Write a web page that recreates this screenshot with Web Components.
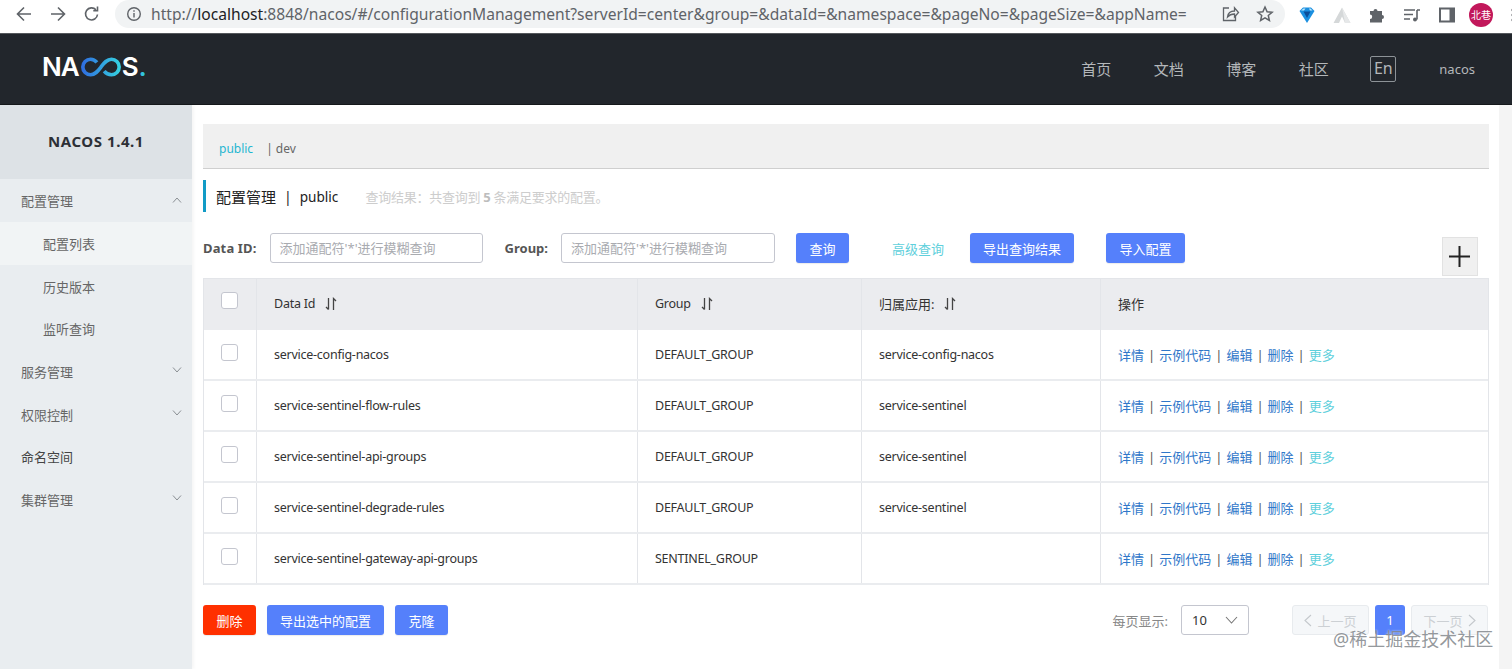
<!DOCTYPE html>
<html>
<head>
<meta charset="utf-8">
<title>Nacos</title>
<style>
    html, body { margin: 0; height: 100%; overflow: hidden; background: #fff; }
    body { font-family: "Noto Sans", "Noto Sans CJK SC", sans-serif; font-size: 13px; color: #333; }
    .shell { display: flex; flex-direction: column; height: 669px; position: relative; }
    .middle { display: flex; flex: 1; min-height: 0; }
</style>
</head>
<body>
<div class="shell">
    <browser-bar url="http://localhost:8848/nacos/#/configurationManagement?serverId=center&group=&dataId=&namespace=&pageNo=&pageSize=&appName="></browser-bar>
    <top-nav></top-nav>
    <div class="middle">
        <side-nav></side-nav>
        <config-page></config-page>
        <page-scrollbar></page-scrollbar>
    </div>
    <juejin-mark>@稀土掘金技术社区</juejin-mark>
</div>

<script>
const cjk = `"Noto Sans", "Noto Sans CJK SC", sans-serif`;

class BrowserBar extends HTMLElement {
    constructor() {
        super();
        this.attachShadow({ mode: 'open' });
    }
    connectedCallback() {
        // host part of the address is darker than the rest, like in Chrome
        const url = this.getAttribute('url');
        const hostStart = url.indexOf('localhost');
        const hostEnd = url.indexOf(':8848');
        this.shadowRoot.innerHTML = `
            <style>
                :host { display: flex; align-items: flex-start; height: 33px; background: #fff; border-bottom: 1px solid #55585c; font-family: ${cjk}; overflow: hidden; }
                svg { display: block; flex: none; }
                .nav { display: flex; gap: 14px; padding: 4px 0 0 14px; }
                .pill { display: flex; align-items: center; flex: none; width: 1170px; height: 28px; margin-left: 13px; background: #f1f3f4; border-radius: 14px; box-sizing: border-box; padding-left: 11px; }
                .url { flex: 1; margin-left: 9px; font-size: 15.6px; color: #5f6368; white-space: nowrap; overflow: hidden; }
                .url b { font-weight: 400; color: #202124; }
                .pill .end { display: flex; gap: 15px; padding-right: 10px; }
                .ext { display: flex; align-items: center; gap: 15px; padding: 3px 0 0 12px; }
                .avatar { width: 24px; height: 24px; border-radius: 50%; background: #c2185b; color: #fff; font-size: 10px; line-height: 24px; text-align: center; flex: none; margin-left: -3px; }
            </style>
            <div class="nav">
                <svg width="20" height="20" viewBox="0 0 20 20" fill="none" stroke="#5f6368" stroke-width="1.6"><path d="M17 10H4M10 3.5 3.5 10l6.5 6.5"/></svg>
                <svg width="20" height="20" viewBox="0 0 20 20" fill="none" stroke="#5f6368" stroke-width="1.6"><path d="M3 10h13M10 3.5l6.5 6.5-6.5 6.5"/></svg>
                <svg width="20" height="20" viewBox="0 0 20 20" fill="none" stroke="#5f6368" stroke-width="1.6"><path d="M15.5 10.5a6 6 0 1 1-1.5-4.6"/><path d="M15.5 2.5v4.2h-4.2" stroke-width="1.6"/></svg>
            </div>
            <div class="pill">
                <svg width="16" height="16" viewBox="0 0 16 16" fill="none" stroke="#5f6368" stroke-width="1.4"><circle cx="8" cy="8" r="6.3"/><path d="M8 7v4.4M8 4.2v1.5"/></svg>
                <div class="url">${url.slice(0, hostStart)}<b>${url.slice(hostStart, hostEnd)}</b>${url.slice(hostEnd).replace(/&/g, '&amp;')}</div>
                <div class="end">
                    <svg width="20" height="20" viewBox="0 0 20 20" fill="none" stroke="#5f6368" stroke-width="1.3"><path d="M9 4H3.5v12.5h12V12"/><path d="M7.5 13c.5-4 3-6 7-6V3.8l4 4.7-4 4.5V10c-3 0-5.300 1-7 3z"/></svg>
                    <svg width="20" height="20" viewBox="0 0 20 20" fill="none" stroke="#5f6368" stroke-width="1.5"><path d="m10 3 2.100 4.700 5 .5-3.800 3.300 1.100 5L10 13.900l-4.400 2.600 1.100-5L2.900 8.200l5-.5z"/></svg>
                </div>
            </div>
            <div class="ext">
                <svg width="20" height="20" viewBox="0 0 20 20"><path d="M2.500 6 6 2.500h8L17.500 6 10 18z" fill="#1a8fe0"/><path d="M6.500 6.500h7L10 13z" fill="#0b4f9a"/><path d="M4 5.500 6.500 3.500h2L7 5.500zM15.500 5.500l-2-2h-1.500l1 2z" fill="#bfe8fb"/></svg>
                <svg width="20" height="20" viewBox="0 0 20 20"><path d="M1.500 18 10 2.500 18.500 18h-5.500L10 11.500 7 18z" fill="#d5d8d9"/><path d="M10 2.500 13 18h5.500z" fill="#e6e8e9"/></svg>
                <svg width="20" height="20" viewBox="0 0 20 20"><path d="M3 6h3.500a2 2 0 1 1 4 0H15v4a2 2 0 1 1 0 4v3.500H3V14a2.200 2.200 0 1 0 0-4.400z" fill="#5f6368"/></svg>
                <svg width="20" height="20" viewBox="0 0 20 20" fill="none" stroke="#5f6368" stroke-width="1.6"><path d="M2 5h11M2 9.500h9M2 14h6M15 5h3M15 5v9.500"/><circle cx="13" cy="14.500" r="2" fill="#5f6368" stroke="none"/></svg>
                <svg width="20" height="20" viewBox="0 0 20 20"><path d="M3 3.500h14v13H3z" fill="#fff" stroke="#5f6368" stroke-width="2"/><path d="M12.500 3.500H17v13h-4.500z" fill="#5f6368"/></svg>
                <div class="avatar">北巷</div>
                <svg width="8" height="20" viewBox="0 0 8 20" fill="#5f6368"><circle cx="5" cy="5" r="1.600"/><circle cx="5" cy="10" r="1.600"/><circle cx="5" cy="15" r="1.600"/></svg>
            </div>`;
    }
}
customElements.define('browser-bar', BrowserBar);

class TopNav extends HTMLElement {
    constructor() {
        super();
        this.attachShadow({ mode: 'open' }).innerHTML = `
            <style>
                :host { display: flex; align-items: center; height: 70px; background: #22262c; border-bottom: 1px solid #15181b; font-family: ${cjk}; }
                .logo { display: flex; align-items: center; margin: -4px 0 0 42px; color: #fff; font: 600 26px/26px "Inter", "Noto Sans", sans-serif; letter-spacing: -1px; }
                .logo svg { display: block; margin: 0 0 0 1px; }
                .logo i { font-style: normal; color: #33c3dc; margin-left: 1px; }
                nav { margin-left: auto; display: flex; align-items: center; padding-right: 37px; color: #b4b7ba; font-size: 15px; }
                nav a { width: 30px; margin-right: 42.500px; margin-top: -1px; }
                .en { box-sizing: border-box; width: 26px; height: 26px; border: 1px solid #8d9297; border-radius: 2px; line-height: 22px; text-align: center; font-size: 16px; margin: 0 43px 0 -1px; }
                .user { font-size: 13px; }
            </style>
            <div class="logo">NA<svg width="42" height="20" viewBox="0 0 42 22" fill="none" stroke-width="4"><defs><linearGradient id="g" x1="0" x2="1"><stop offset="0" stop-color="#2f6fe0"/><stop offset="1" stop-color="#35cfe0"/></linearGradient></defs><path d="M16.500 6C14.500 3.500 12 2.500 9.500 2.500a8.500 8.500 0 0 0 0 17c5 0 8-4 11.500-8.500s6.500-8.500 11.500-8.500a8.500 8.500 0 0 1 0 17c-3 0-6-1.500-8-4" stroke="url(#g)"/></svg>S<i>.</i></div>
            <nav>
                <a>首页</a><a>文档</a><a>博客</a><a>社区</a>
                <div class="en">En</div>
                <div class="user">nacos</div>
            </nav>`;
    }
}
customElements.define('top-nav', TopNav);

class SideNav extends HTMLElement {
    constructor() {
        super();
        const chevron = up => `<svg width="10" height="6" viewBox="0 0 10 6" fill="none" stroke="#8a8f94" stroke-width="1"><path d="${up ? 'M1 5.500 5 1l4 4.500' : 'M1 .5 5 5l4-4.500'}"/></svg>`;
        const items = [
            { text: '配置管理', open: true },
            { text: '配置列表', sub: true, active: true },
            { text: '历史版本', sub: true },
            { text: '监听查询', sub: true },
            { text: '服务管理', arrow: true },
            { text: '权限控制', arrow: true },
            { text: '命名空间', dark: true },
            { text: '集群管理', arrow: true },
        ];
        const rows = items.map(i => `
            <div class="item ${i.sub ? 'sub' : ''} ${i.active ? 'active' : ''} ${i.dark ? 'dark' : ''}">
                <span>${i.text}</span>${i.open ? chevron(true) : i.arrow ? chevron(false) : ''}
            </div>`).join('');
        this.attachShadow({ mode: 'open' }).innerHTML = `
            <style>
                :host { display: block; flex: none; width: 192px; background: #e9edf0; box-shadow: 2px 0 3px rgba(0,0,0,.04); font-family: ${cjk}; font-size: 13px; color: #666; }
                .title { height: 74.300px; background: #dde2e6; display: flex; align-items: center; justify-content: center; color: #2d3036; font: 700 15px "Noto Sans", sans-serif; letter-spacing: .55px; padding-bottom: 2px; box-sizing: border-box; }
                .item { display: flex; align-items: center; justify-content: space-between; height: 42.700px; padding: 0 10px 0 21px; box-sizing: border-box; }
                .item svg { margin-top: -2px; }
                .sub { padding-left: 43px; }
                .active { background: #f1f4f5; }
                .dark { color: #444; }
            </style>
            <div class="title">NACOS 1.4.1</div>
            ${rows}`;
    }
}
customElements.define('side-nav', SideNav);

class NacosButton extends HTMLElement {
    constructor() {
        super();
        this.attachShadow({ mode: 'open' }).innerHTML = `
            <style>
                :host { display: inline-flex; align-items: center; justify-content: center; flex: none; box-sizing: border-box; height: 30px; padding: 0 13px; border-radius: 3px; background: #5580fb; color: #fff; font-family: ${cjk}; font-size: 13px; box-shadow: 0 1px 1px rgba(0,0,0,.08); }
                :host([danger]) { background: #ff3000; }
            </style>
            <slot></slot>`;
    }
}
customElements.define('nacos-button', NacosButton);

class SearchField extends HTMLElement {
    constructor() {
        super();
        this.attachShadow({ mode: 'open' }).innerHTML = `
            <style>
                :host { display: flex; align-items: center; flex: none; font-family: ${cjk}; }
                label { font: 700 13px "Noto Sans", sans-serif; color: #555; margin-right: 13px; letter-spacing: var(--label-spacing, 0); }
                .box { box-sizing: border-box; width: var(--box-width, 214px); height: 30px; border: 1px solid #c4c6cf; border-radius: 3px; background: #fff; padding-left: 9px; line-height: 28px; font-size: 13px; color: #a9abb0; }
            </style>
            <label><slot></slot></label>
            <div class="box">添加通配符'*'进行模糊查询</div>`;
    }
}
customElements.define('search-field', SearchField);

class ConfigTable extends HTMLElement {
    constructor() {
        super();
        const rows = [
            ['service-config-nacos', 'DEFAULT_GROUP', 'service-config-nacos'],
            ['service-sentinel-flow-rules', 'DEFAULT_GROUP', 'service-sentinel'],
            ['service-sentinel-api-groups', 'DEFAULT_GROUP', 'service-sentinel'],
            ['service-sentinel-degrade-rules', 'DEFAULT_GROUP', 'service-sentinel'],
            ['service-sentinel-gateway-api-groups', 'SENTINEL_GROUP', ''],
        ];
        const sort = `<svg class="sort" width="12" height="14" viewBox="0 0 12 14" fill="none" stroke="#444" stroke-width="1.300"><path d="M3.500 1v11.500M1 10l2.500 2.500M8.500 13V1.500L11 4"/></svg>`;
        const links = `<a>详情</a><s>|</s><a>示例代码</a><s>|</s><a>编辑</a><s>|</s><a>删除</a><s>|</s><a class="more">更多</a>`;
        const body = rows.map(r => `
            <div class="row">
                <div class="cell check"><span class="box"></span></div>
                <div class="cell">${r[0]}</div>
                <div class="cell">${r[1]}</div>
                <div class="cell">${r[2]}</div>
                <div class="cell ops">${links}</div>
            </div>`).join('');
        this.attachShadow({ mode: 'open' }).innerHTML = `
            <style>
                :host { display: block; font-family: ${cjk}; font-size: 12.500px; letter-spacing: -.25px; color: #333; border: solid #e3e5e9; border-width: 1px 1px 0 1px; }
                .row { display: grid; grid-template-columns: 52px 381px 224px 239px 1fr; height: 51px; box-sizing: border-box; border-bottom: 2px solid #eaecef; }
                .head { height: 51px; background: #ebecef; border-bottom: 0; }
                .cell { display: flex; align-items: center; padding: 0 17px; border-left: 1px solid #e3e5e9; white-space: nowrap; }
                .cell:first-child { border-left: 0; }
                .head .cell { padding-bottom: 2px; box-sizing: border-box; }
                .head .cjk { font-size: 13px; letter-spacing: 0; }
                .sort { margin-left: 10px; }
                .row .check { padding: 0 0 4px 17px; }
                .head .check { padding-bottom: 8px; }
                .box { width: 15px; height: 15px; border: 1px solid #c4c6cf; border-radius: 3px; background: #fff; }
                .ops { font-size: 13px; letter-spacing: 0; }
                a { color: #2f77c9; }
                a.more { color: #5fd0dc; }
                s { text-decoration: none; color: #555; margin: 0 4px; }
            </style>
            <div class="row head">
                <div class="cell check"><span class="box"></span></div>
                <div class="cell">Data Id${sort}</div>
                <div class="cell">Group${sort}</div>
                <div class="cell cjk">归属应用:${sort}</div>
                <div class="cell cjk">操作</div>
            </div>
            ${body}`;
    }
}
customElements.define('config-table', ConfigTable);

class PagerBar extends HTMLElement {
    constructor() {
        super();
        this.attachShadow({ mode: 'open' }).innerHTML = `
            <style>
                :host { display: flex; align-items: center; margin: 0 1px 0 auto; font-family: ${cjk}; font-size: 13px; color: #888; }
                .select { box-sizing: border-box; width: 68px; height: 30px; margin: 0 43px 0 13px; border: 1px solid #c4c6cf; border-radius: 3px; display: flex; align-items: center; justify-content: space-between; padding: 0 10px; color: #333; }
                .page { box-sizing: border-box; height: 30px; width: 77px; display: flex; align-items: center; justify-content: center; gap: 5px; background: #f5f7f9; border: 1px solid #e8ebee; border-radius: 3px; color: #ccd0d4; white-space: nowrap; }
                .cur { width: 30px; margin: 0 6px; background: #5580fb; border: 0; color: #fff; }
            </style>
            <span>每页显示:</span>
            <div class="select">10 <svg width="13" height="8" viewBox="0 0 13 8" fill="none" stroke="#777" stroke-width="1.100"><path d="m1 1 5.500 6L12 1"/></svg></div>
            <div class="page"><svg width="8" height="13" viewBox="0 0 8 13" fill="none" stroke="#c4c8cc" stroke-width="1.100"><path d="M7 1 1 6.500 7 12"/></svg>上一页</div>
            <div class="page cur">1</div>
            <div class="page">下一页<svg width="8" height="13" viewBox="0 0 8 13" fill="none" stroke="#c4c8cc" stroke-width="1.100"><path d="m1 1 6 5.500L1 12"/></svg></div>`;
    }
}
customElements.define('pager-bar', PagerBar);

class ConfigPage extends HTMLElement {
    constructor() {
        super();
        this.attachShadow({ mode: 'open' }).innerHTML = `
            <style>
                :host { display: block; flex: 1; min-width: 0; padding: 19px 10px 0 11px; font-family: ${cjk}; font-size: 13px; color: #333; }
                .tabs { display: flex; align-items: center; height: 45px; box-sizing: border-box; padding: 5px 0 0 16px; background: #f0f0f0; border-bottom: 1px solid #cfcfcf; font-size: 12px; color: #666; }
                .tabs .on { color: #1fb6d0; margin-right: 13px; }
                .title { display: flex; align-items: center; height: 32px; margin-top: 11px; border-left: 3px solid #129bc6; padding-left: 10px; font-size: 15px; color: #222; }
                .title .bar { margin: 0 8px; font-size: 14px; }
                .title .ns { font-size: 13.600px; }
                .title small { margin-left: 27px; font-size: 13px; color: #cdcdcd; letter-spacing: -.25px; }
                .title small b { color: #bdbdbd; }
                .form { display: flex; align-items: flex-start; height: 30px; margin-top: 21px; }
                .form search-field:first-child { --label-spacing: .15px; --box-width: 213px; }
                .form search-field:nth-child(2) { margin-left: 22px; }
                .form .q { margin-left: 21px; width: 53px; padding: 0; }
                .adv { margin: 6px 26px 0 43px; color: #5fd0dc; }
                .plus { box-sizing: border-box; width: 36px; height: 39px; margin: 4px 11px 0 auto; background: #f0f0f0; border: 1px solid #e2e2e2; position: relative; flex: none; }
                .plus svg { display: block; margin: 7px 0 0 5px; }
                config-table { margin-top: 15px; }
                .foot { display: flex; align-items: center; margin-top: 20px; gap: 11px; }
                .foot .red { width: 53px; padding: 0; }
                .foot .clone { width: 53px; padding: 0; }
                .imp { margin-left: 32px; width: 79px; padding: 0; }
            </style>
            <div class="tabs"><span class="on">public</span><span>| dev</span></div>
            <div class="title">配置管理<span class="bar">|</span><span class="ns">public</span><small>查询结果：共查询到 <b>5</b> 条满足要求的配置。</small></div>
            <div class="form">
                <search-field>Data ID:</search-field>
                <search-field>Group:</search-field>
                <nacos-button class="q">查询</nacos-button>
                <span class="adv">高级查询</span>
                <nacos-button>导出查询结果</nacos-button>
                <nacos-button class="imp">导入配置</nacos-button>
                <div class="plus"><svg width="23" height="23" viewBox="0 0 23 23" fill="none" stroke="#222" stroke-width="2"><path d="M11.500 1v21M1 11.500h21"/></svg></div>
            </div>
            <config-table></config-table>
            <div class="foot">
                <nacos-button class="red" danger>删除</nacos-button>
                <nacos-button>导出选中的配置</nacos-button>
                <nacos-button class="clone">克隆</nacos-button>
                <pager-bar></pager-bar>
            </div>`;
    }
}
customElements.define('config-page', ConfigPage);

class PageScrollbar extends HTMLElement {
    constructor() {
        super();
        this.attachShadow({ mode: 'open' }).innerHTML = `<style>:host { display: block; flex: none; width: 13px; background: #f4f4f4; }</style>`;
    }
}
customElements.define('page-scrollbar', PageScrollbar);

// the site watermark sits over the pager, so this one is absolute
class JuejinMark extends HTMLElement {
    constructor() {
        super();
        this.attachShadow({ mode: 'open' }).innerHTML = `
            <style>
                :host { position: absolute; left: 1333px; top: 626px; font-family: ${cjk}; font-size: 18px; line-height: 26px; color: rgba(120,125,130,.8); white-space: nowrap; text-shadow: 0 0 2px rgba(255,255,255,.8); }
            </style>
            <slot></slot>`;
    }
}
customElements.define('juejin-mark', JuejinMark);
</script>
</body>
</html>
